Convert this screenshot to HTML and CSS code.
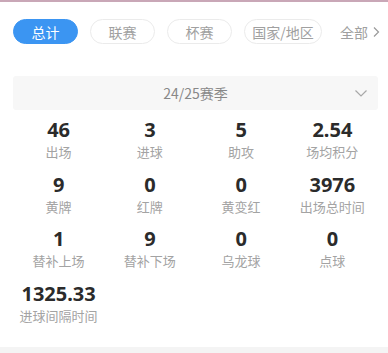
FILE: index.html
```html
<!DOCTYPE html>
<html lang="zh">
<head>
<meta charset="utf-8">
<link rel="stylesheet" href="styles.css">
</head>
<body>
<div class="page">
  <div class="tabs">
    <span class="tab active">总计</span>
    <span class="tab">联赛</span>
    <span class="tab">杯赛</span>
    <span class="tab wide">国家/地区</span>
    <span class="more">全部
      <svg class="more-icon" width="9" height="12" viewBox="0 0 9 12"><path d="M2 1.5 L6.5 6 L2 10.5" fill="none" stroke="#9a9a9a" stroke-width="1.2"/></svg>
    </span>
  </div>
  <div class="season">
    <span class="season-text">24/25赛季</span>
    <svg class="chev" width="14" height="9" viewBox="0 0 14 9"><path d="M1.5 1.5 L7 7 L12.5 1.5" fill="none" stroke="#a8a8a8" stroke-width="1.2"/></svg>
  </div>
  <div class="stats">
    <div class="cell"><div class="num">46</div><div class="lbl">出场</div></div>
    <div class="cell"><div class="num">3</div><div class="lbl">进球</div></div>
    <div class="cell"><div class="num">5</div><div class="lbl">助攻</div></div>
    <div class="cell"><div class="num">2.54</div><div class="lbl">场均积分</div></div>
    <div class="cell"><div class="num">9</div><div class="lbl">黄牌</div></div>
    <div class="cell"><div class="num">0</div><div class="lbl">红牌</div></div>
    <div class="cell"><div class="num">0</div><div class="lbl">黄变红</div></div>
    <div class="cell"><div class="num">3976</div><div class="lbl">出场总时间</div></div>
    <div class="cell"><div class="num">1</div><div class="lbl">替补上场</div></div>
    <div class="cell"><div class="num">9</div><div class="lbl">替补下场</div></div>
    <div class="cell"><div class="num">0</div><div class="lbl">乌龙球</div></div>
    <div class="cell"><div class="num">0</div><div class="lbl">点球</div></div>
    <div class="cell"><div class="num">1325.33</div><div class="lbl">进球间隔时间</div></div>
  </div>
  <div class="footer-band"></div>
</div>
</body>
</html>
```
FILE: styles.css
```css
html, body {
  margin: 0;
  padding: 0;
  background: #ffffff;
}
body {
  font-family: "Noto Sans", "Noto Sans CJK SC", sans-serif;
  width: 388px;
  height: 353px;
  overflow: hidden;
}
.page {
  border-top: 2px solid #c9a7b7;
  height: 351px;
  display: flex;
  flex-direction: column;
}
.tabs {
  display: flex;
  align-items: center;
  padding: 17px 0 0 13px;
  gap: 12px;
  white-space: nowrap;
}
.tab {
  box-sizing: border-box;
  width: 65px;
  height: 25px;
  border: 1px solid #ebebeb;
  border-radius: 13px;
  font-family: "Noto Sans CJK SC", sans-serif;
  font-size: 14px;
  color: #a0a0a0;
  display: flex;
  align-items: center;
  justify-content: center;
}
.tab.active {
  background: #3b95f2;
  border-color: #3b95f2;
  color: #ffffff;
}
.tab.wide {
  width: 78px;
}
.more {
  margin-left: 6px;
  font-family: "Noto Sans CJK SC", sans-serif;
  font-size: 14px;
  color: #a0a0a0;
  display: flex;
  align-items: center;
  gap: 4px;
}
.season {
  margin: 32px 10px 0 13px;
  height: 34px;
  background: #f7f7f7;
  border-radius: 3px;
  position: relative;
  display: flex;
  align-items: center;
  justify-content: center;
}
.season-text {
  font-family: "Noto Sans CJK SC", sans-serif;
  font-size: 14px;
  color: #888888;
}
.chev {
  position: absolute;
  right: 10px;
  top: 13px;
}
.stats {
  margin: 8px 10px 0 13px;
  display: grid;
  grid-template-columns: repeat(4, 1fr);
  grid-auto-rows: 54.5px;
}
.cell {
  display: flex;
  flex-direction: column;
  align-items: center;
}
.num {
  font-family: "Noto Sans", "Open Sans", sans-serif;
  font-weight: 700;
  font-size: 20px;
  line-height: 24px;
  color: #2b2b2b;
}
.lbl {
  font-family: "Noto Sans CJK SC", sans-serif;
  font-size: 13px;
  line-height: 20px;
  color: #a3a3a3;
  margin-top: 0;
}
.footer-band {
  margin-top: auto;
  height: 6px;
  background: #f4f4f4;
}
```
